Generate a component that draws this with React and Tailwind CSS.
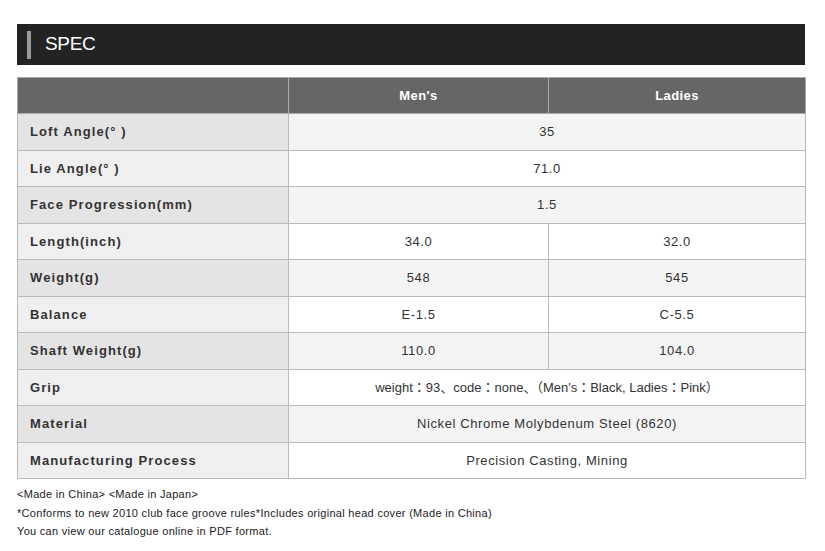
const rows = [
  { label: "Loft Angle(° )", value: "35" },
  { label: "Lie Angle(° )", value: "71.0" },
  { label: "Face Progression(mm)", value: "1.5" },
  { label: "Length(inch)", mens: "34.0", ladies: "32.0" },
  { label: "Weight(g)", mens: "548", ladies: "545" },
  { label: "Balance", mens: "E-1.5", ladies: "C-5.5" },
  { label: "Shaft Weight(g)", mens: "110.0", ladies: "104.0" },
  { label: "Grip", value: "weight：93、code：none、（Men's：Black, Ladies：Pink）", tight: true },
  { label: "Material", value: "Nickel Chrome Molybdenum Steel (8620)" },
  { label: "Manufacturing Process", value: "Precision Casting, Mining" },
];

const font = { fontFamily: '"Liberation Sans", "Noto Sans CJK JP", sans-serif' };

export default function App() {
  return (
    <div className="w-[825px] h-[551px] bg-white pt-6 pl-[17px] pr-5 text-[#333]" style={font}>
      {/* ── Title bar ── */}
      <div className="h-[41px] bg-[#232323] flex items-center pl-[10px]">
        <span className="w-[4px] h-[28px] bg-[#999]" />
        <h2 className="ml-[14px] text-[19px] text-white tracking-[-0.3px]">SPEC</h2>
      </div>

      {/* ── Spec table ── */}
      <table className="mt-3 w-[788px] border-collapse table-fixed text-[13px]">
        <colgroup>
          <col className="w-[271px]" />
          <col className="w-[260px]" />
          <col className="w-[257px]" />
        </colgroup>
        <thead>
          <tr className="h-[36px] bg-[#666] text-white font-bold tracking-[0.4px]">
            <th className="border border-[#aaa]" />
            <th className="border border-[#aaa] text-center">Men's</th>
            <th className="border border-[#aaa] text-center">Ladies</th>
          </tr>
        </thead>
        <tbody>
          {rows.map((r, i) => {
            const odd = i % 2 === 0;
            const cell = `border border-[#bbb] text-center ${r.tight ? "" : "tracking-[0.6px]"} ${odd ? "bg-[#f4f4f4]" : "bg-white"}`;
            return (
              <tr key={r.label} className="h-[36.5px]">
                <td className={`border border-[#bbb] pl-3 font-bold tracking-[1.1px] ${odd ? "bg-[#e4e4e4]" : "bg-[#efefef]"}`}>
                  {r.label}
                </td>
                {r.value ? (
                  <td colSpan={2} className={cell}>{r.value}</td>
                ) : (
                  <>
                    <td className={cell}>{r.mens}</td>
                    <td className={cell}>{r.ladies}</td>
                  </>
                )}
              </tr>
            );
          })}
        </tbody>
      </table>

      {/* ── Notes ── */}
      <div className="mt-[6px] text-[11px] leading-[18.5px] tracking-[0.3px] text-[#222]">
        <p>&lt;Made in China&gt; &lt;Made in Japan&gt;</p>
        <p>*Conforms to new 2010 club face groove rules*Includes original head cover (Made in China)</p>
        <p>You can view our catalogue online in PDF format.</p>
      </div>
    </div>
  );
}
